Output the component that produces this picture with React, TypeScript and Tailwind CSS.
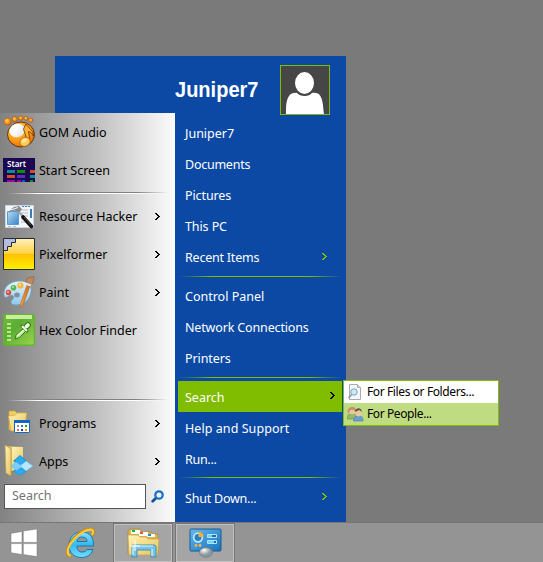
import React from "react";

const uiFont = "font-['Noto_Sans','Open_Sans',sans-serif]";

function Chevron({ className = "" }: { className?: string }) {
  return (
    <svg className={className} width="6" height="9" viewBox="0 0 6 9" shapeRendering="crispEdges" fill="currentColor">
      <path d="M0 1h2v1h1v1h1v1h1v1h-1v1h-1v1h-1v1h-2v-1h1v-1h1v-1h1v-1h-1v-1h-1v-1h-1z" />
    </svg>
  );
}

function GomIcon() {
  return (
    <svg width="34" height="34" viewBox="0 0 34 34">
      <defs>
        <radialGradient id="gom" cx=".35" cy=".3" r=".8">
          <stop offset="0" stopColor="#ffd45c" /><stop offset=".55" stopColor="#ff9d12" /><stop offset="1" stopColor="#e95f00" />
        </radialGradient>
        <linearGradient id="gomw" x1="0" y1="0" x2="1" y2="1">
          <stop offset=".4" stopColor="#fff" /><stop offset="1" stopColor="#d4dbe0" />
        </linearGradient>
      </defs>
      <g fill="url(#gom)" stroke="#b95008" strokeWidth=".7">
        <circle cx="4.5" cy="6.6" r="3.5" /><circle cx="11.8" cy="4.2" r="2.5" /><circle cx="17.8" cy="3.2" r="2.1" /><circle cx="23" cy="3.4" r="2" /><circle cx="27.8" cy="5.3" r="2" />
        <ellipse cx="18" cy="19.5" rx="13.5" ry="12.5" stroke="#613519" strokeWidth="1" />
      </g>
      <ellipse cx="14" cy="15.5" rx="7.8" ry="6.6" fill="url(#gomw)" transform="rotate(-15 14 15)" />
      <path d="M20.500 14l2.500-5c2 4 7 5 7.500 12-1.500-3-3-4-5-4.500l1.200 8-2.500 1z" fill="#ffb02d" stroke="#633819" strokeWidth=".8" />
      <ellipse cx="22" cy="26.8" rx="5.3" ry="4.4" fill="#ffcb51" stroke="#a85d16" strokeWidth=".7" transform="rotate(-25 22 26.8)" />
      <ellipse cx="21" cy="25.500" rx="2.8" ry="2" fill="#ffe3a0" transform="rotate(-25 21 25)" />
    </svg>
  );
}

function StartIcon() {
  return (
    <svg width="32" height="24" viewBox="0 0 32 24">
      <path fill="#1b0752" d="M0 0h32v24H0z" />
      <text x="4" y="9" fill="#fff" fontFamily="Noto Sans, sans-serif" fontSize="9" fontWeight="600" textLength="19" lengthAdjust="spacingAndGlyphs">Start</text>
      <g shapeRendering="crispEdges">
        <path fill="#078d9c" d="M4 12h8v3H4zM27 17h5v3h-5z" /><path fill="#0b9108" d="M14 12h8v3h-8zM27 22h3v2h-3z" />
        <path fill="#d84a25" d="M27 12h5v3h-5zM4 17h8v3H4z" /><path fill="#5930b4" d="M14 17h8v3h-8z" />
        <path fill="#9a0697" d="M4 22h8v2H4zM14 22h4v2h-4z" /><path fill="#0758ca" d="M19 22h3v2h-3z" />
      </g>
    </svg>
  );
}

function HackerIcon() {
  return (
    <svg width="29" height="24" viewBox="0 0 29 24">
      <defs><linearGradient id="rh" x2="1" y2="1"><stop stopColor="#b9dcf5" /><stop offset="1" stopColor="#3683ca" /></linearGradient></defs>
      <path fill="#f4f6f9" stroke="#cbd7e4" d="M.5.5h28v22H.5z" />
      <path fill="#397eb9" d="M17 1h2v1h-2zM20 1h2v1h-2zM23 1h2v1h-2zM25 4h2v9h-2z" /><path fill="url(#rh)" stroke="#559bd3" d="M2.5 6.500h11v13h-11z" />
      <path d="M16 5h7M16 8h7M18 11h5M16 14h3M16 17h5M3 21.500h3M8 21.500h3" stroke="#a8b0b8" strokeWidth=".8" />
      <path d="M4 8c1-3 3-5 5-6l5-1 3 3-3 4-3-2c-2-.5-4 0-7 2z" fill="#85898c" />
      <path d="M6 5l7-2.500" stroke="#eee" strokeWidth="1.2" /><path d="M14 7l5 6" stroke="#a4a9ad" strokeWidth="2.5" />
      <path d="M18 12l8.500 9.500" stroke="#101214" strokeWidth="3.600" strokeLinecap="round" /><path d="M19 12l7 8" stroke="#575b5e" strokeWidth=".8" />
    </svg>
  );
}

function PixelformerIcon() {
  return (
    <svg width="32" height="32" viewBox="0 0 32 32">
      <defs><linearGradient id="px" x2="0" y2="1"><stop stopColor="#fff0c0" /><stop offset=".5" stopColor="#ffd13d" /><stop offset=".51" stopColor="#ffc000" /><stop offset="1" stopColor="#fff200" /></linearGradient></defs>
      <path fill="url(#px)" stroke="#26272a" d="M.5.5h31v31H.5z" />
      <path fill="#b3bddf" stroke="#252936" d="M.5.5h12v4h-4v4h-4v4h-4z" />
    </svg>
  );
}

function PaintIcon() {
  return (
    <svg width="33" height="32" viewBox="0 0 33 32">
      <defs>
        <linearGradient id="pal" x2="0" y2="1"><stop stopColor="#e4f4fe" /><stop offset="1" stopColor="#8fc8e9" /></linearGradient>
        <linearGradient id="brush"><stop stopColor="#f8a444" /><stop offset="1" stopColor="#cf661d" /></linearGradient>
      </defs>
      <path d="M.8 18C1 10 8 5 17 5c8 0 12 5 11 11-1 8-7 13-15 13-6 0-6-3-3-6 2-3-1-5-4-3-3 2-5 2-5.200-2z" fill="url(#pal)" stroke="#659fbe" strokeWidth=".8" />
      <ellipse cx="14" cy="19" rx="2.8" ry="2.5" fill="#7c929f" /><circle cx="5.5" cy="16.5" r="2.7" fill="#dc4a42" /><circle cx="10.5" cy="11.8" r="2.8" fill="#54b852" /><circle cx="17.500" cy="9.5" r="3.1" fill="#ffb52c" />
      <g fill="#fff" opacity=".6"><circle cx="5" cy="16" r="1" /><circle cx="10" cy="11" r="1" /><circle cx="17" cy="9" r="1.2" /></g>
      <path d="M24 9l3 1-7 19-3 2.500.5-3.500z" fill="url(#brush)" stroke="#b86224" strokeWidth=".6" />
      <path d="M23 6l1-4 7-1.500c-1 2 1 5-3 8.500z" fill="#bd8860" stroke="#8d6040" strokeWidth=".6" /><path d="M23.500 6.500l5 2-1.200 2-4.300-1.500z" fill="#e1dfd9" />
    </svg>
  );
}

function HexIcon() {
  return (
    <svg width="32" height="32" viewBox="0 0 32 32">
      <defs><linearGradient id="hex" x2="1" y2="1"><stop stopColor="#72bb3c" /><stop offset=".4" stopColor="#5bad35" /><stop offset="1" stopColor="#9ed64d" /></linearGradient></defs>
      <rect x=".7" y=".7" width="30.6" height="30.6" rx="2" fill="url(#hex)" stroke="#65b52a" strokeWidth="1.4" />
      <path fill="#d3f5a5" d="M3 1h26v4H3z" opacity=".9" /><path fill="#d5f69f" opacity=".8" d="M4 9h4v2H4zm0 4h4v2H4zm0 4h4v2H4zm0 4h4v2H4zm0 4h4v2H4z" />
      <path d="M12 25l1-4 8-7 2.500 2.500-7 7z" fill="#b3e681" stroke="#25671a" strokeWidth=".8" /><path d="M14 22l7-6" stroke="#efffd9" strokeWidth="1.3" />
      <path d="M19 12l5 5" stroke="#25671a" strokeWidth="3" strokeLinecap="round" /><path d="M23 13l2-2" stroke="#25671a" strokeWidth="5.500" strokeLinecap="round" />
      <path d="M19.500 12.500l4 4" stroke="#efffe3" strokeWidth="2" strokeLinecap="round" /><path d="M23.500 12.500l1.500-1.500" stroke="#efffe3" strokeWidth="3.800" strokeLinecap="round" />
    </svg>
  );
}

function FolderDefs() {
  return <defs><linearGradient id="fold" x2="1" y2="1"><stop stopColor="#fff3b4" /><stop offset="1" stopColor="#e5c463" /></linearGradient></defs>;
}

function ProgramsIcon() {
  return (
    <svg width="32" height="32" viewBox="0 0 32 32">
      <FolderDefs />
      <path d="M6 23V5q0-1 1-1h5l2 2h9v16z" fill="#f2cf62" stroke="#cfa53c" strokeWidth=".8" /><path d="M5.500 9l7-1 2-2h9l-2 18H8z" fill="url(#fold)" stroke="#d2ad4e" strokeWidth=".8" />
      <rect x="11.5" y="13.500" width="15" height="12" rx=".8" fill="#fff" stroke="#1166be" /><path fill="#1266c6" d="M11 13h16v3H11z" />
      <g shapeRendering="crispEdges"><path fill="#898ea0" d="M14 18h2v2h-2z" /><path fill="#4c77b5" d="M18 18h2v2h-2z" /><path fill="#20a42a" d="M22 18h2v2h-2z" /><path fill="#e96940" d="M14 22h2v2h-2z" /><path fill="#163894" d="M18 22h2v2h-2z" /><path fill="#e3a000" d="M22 22h2v2h-2z" /></g>
    </svg>
  );
}

function AppsIcon() {
  return (
    <svg width="32" height="34" viewBox="0 0 32 34">
      <FolderDefs />
      <path d="M3 2l17 1v24H6z" fill="#e0be61" /><path d="M9 3h11v23H9z" fill="url(#fold)" /><path d="M2 1l6 4v27l-5-3z" fill="url(#fold)" stroke="#b99c4f" strokeWidth=".7" />
      <path fill="#2198df" d="M17 11l7 6-7 6-7-6zM17 22l7 5-7 5-7-5z" /><path fill="#7fcdf5" stroke="#60bde9" strokeWidth=".5" d="M14 17l6 5-6 5-6-5z" /><path fill="#b5e8ff" stroke="#58bce9" strokeWidth=".5" d="M23 17l7 5-7 5-6-5z" /><path fill="#2daaf0" d="M17 24l5 3.500-5 4-5-4zM17 12l5 5-5 4-5-4z" />
    </svg>
  );
}

function SearchIcon() {
  return <svg width="14" height="14" viewBox="0 0 14 14" fill="none"><path d="M5 8L1.700 11.300" stroke="#164fa1" strokeWidth="2.8" strokeLinecap="round" /><circle cx="8" cy="5" r="3.700" stroke="#1972c5" strokeWidth="2.300" /></svg>;
}

function WindowsIcon() {
  return <svg width="28" height="28" viewBox="0 0 28 28"><path d="M1 4.4l11-2v11H1zM13.3 2.1L27 0v13.4H13.3zM1 14.6h11v10.9L1 23.7zM13.3 14.6H27v13l-13.7-2z" fill="#fff" stroke="#777" strokeWidth=".5" /></svg>;
}

function IeIcon() {
  return (
    <svg width="32" height="32" viewBox="0 0 32 32" fill="none">
      <defs><linearGradient id="ie" x2="0" y2="1"><stop stopColor="#8be3fd" /><stop offset=".5" stopColor="#35b9ee" /><stop offset="1" stopColor="#75ddfc" /></linearGradient></defs>
      <path fillRule="evenodd" d="M28.500 19H12c0 4 2 6 5 6s4-1 5-2.500h6c-2 5.500-6 8-11.500 8-7.500 0-12.500-5-12.500-12.500S9 5 17 5s12 6 11.500 14zM12 14.500h10c0-3-2-4.500-5-4.500s-4.500 1.500-5 4.500z" fill="url(#ie)" stroke="#1679b6" />
      <path d="M6 29c-5 1-5-6-1-12.500C10 8 19 2.500 25 2c5-1 4 4 2 7" stroke="#c98c20" strokeWidth="2.8" />
      <path d="M5.500 28.500c-4-.5-3.500-6 0-11.500C11 8.500 19 3 25.500 2.500c3 0 3 3 1.500 5.500" stroke="#ffd037" strokeWidth="2" />
    </svg>
  );
}

function ExplorerIcon() {
  return (
    <svg width="33" height="30" viewBox="0 0 33 30">
      <FolderDefs />
      <path fill="#dab251" stroke="#aa8439" strokeWidth=".7" d="M1 3l2-2h10l2 3h9l2 2h5v20H1z" />
      <path fill="#fffdf0" d="M4 2h9v4H4zm8 2h9v4h-9zm8 2h8v3h-8z" />
      <path fill="#18b33d" d="M5 2h3v2H5z" /><path fill="#e85732" d="M13 4h3v2h-3z" /><path fill="#298acf" d="M21 6h3v2h-3z" />
      <path fill="url(#fold)" stroke="#c6a550" strokeWidth=".7" d="M1 7h10l2 2h6l2 2h11l-1 16H2z" />
      <path d="M5 29V18q0-1 1-1h21q2 0 2 2v10h-5v-7H10v7z" fill="#79c4e6" stroke="#3d91b1" /><path d="M6 27v-9h20M25 21v7" fill="none" stroke="#d9f8ff" strokeWidth="1.2" />
      <path d="M8 12v11M3 18h10" stroke="#fff" strokeWidth="1" />
    </svg>
  );
}

function ControlIcon() {
  return (
    <svg width="33" height="30" viewBox="0 0 33 30">
      <defs><linearGradient id="cp" x2="1" y2="1"><stop stopColor="#64b9ed" /><stop offset="1" stopColor="#1972bc" /></linearGradient><radialGradient id="orb" cx=".35" cy=".25"><stop stopColor="#fff" /><stop offset="1" stopColor="#8c989c" /></radialGradient></defs>
      <rect x="1" y="1" width="31" height="22" rx="1" fill="url(#cp)" stroke="#185d95" />
      <circle cx="9" cy="9.500" r="4.3" fill="#2382cc" stroke="#c2e9ff" strokeWidth="1.7" /><path d="M9.500 9V4q5 0 5 5z" fill="#ffac37" />
      <path fill="#1a6eaf" stroke="#b7e4fb" d="M18.5 6.500h9v3h-9zm0 6h9v3h-9z" /><path d="M19 8h4m-4 6h6" stroke="#65d6ff" strokeWidth="2" />
      <circle cx="7" cy="17.500" r="1.4" fill="#ffb150" /><circle cx="11" cy="17.500" r="1.4" fill="#ffb150" />
      <ellipse cx="17" cy="24.500" rx="6.500" ry="4.800" fill="url(#orb)" stroke="#737d81" strokeWidth=".7" />
    </svg>
  );
}

function FilesIcon() {
  return <svg width="16" height="16" viewBox="0 0 16 16"><path d="M2.500.5h8l3 3v12h-11z" fill="#f5f6f7" stroke="#a9abad" /><path d="M10.500.5v3h3" fill="#ddd" stroke="#aaa" /><path d="M5 10l-3.500 4" stroke="#8b9aa6" strokeWidth="1.600" /><circle cx="7" cy="8" r="3.200" fill="#cee8f7" stroke="#7ba1b9" /></svg>;
}

function PeopleIcon() {
  return (
    <svg width="17" height="16" viewBox="0 0 17 16">
      <path d="M0 13c0-4 2-5 5-5s5 1 5 5z" fill="#93bd62" stroke="#5d9150" strokeWidth=".6" /><circle cx="5" cy="5.500" r="3" fill="#ebc6a2" /><path d="M1 8C0 3 2 1 5 1s5 2 4 5C7 4.500 6 3.500 4 4 2 4 3 7 1 8z" fill="#c29263" />
      <path d="M6.500 15c0-4 1.500-5 5-5s4.500 1 4.500 5z" fill="#6a9fd0" stroke="#4b7aa8" strokeWidth=".6" /><ellipse cx="11.500" cy="7" rx="2.800" ry="3.500" fill="#edc5a0" /><path d="M8 6c0-5 7.500-5 6.500 0l-2-2z" fill="#5a5850" />
    </svg>
  );
}

function LeftRow({ icon, label, arrow = false }: { icon: React.ReactNode; label: string; arrow?: boolean }) {
  return (
    <div className="flex h-[38px] items-center pl-[3px] pr-[14px]">
      <span className="flex w-9 shrink-0 justify-start">{icon}</span>
      <span className="whitespace-nowrap pt-0.5">{label}</span>
      {arrow && <Chevron className="ml-auto" />}
    </div>
  );
}

function RightRow({ label, arrow = false, active = false, track = "", pad = "" }: { label: string; arrow?: boolean; active?: boolean; track?: string; pad?: string }) {
  return (
    <div className={`ml-[3px] mr-1 flex h-[31px] items-center pl-[7px] ${active ? "bg-[#80bc00] pr-1.5" : "pr-[14px]"}`}>
      <span className={`whitespace-nowrap ${track} ${pad}`}>{label}</span>
      {arrow && <Chevron className={`ml-auto -translate-y-px ${active ? "text-black" : "text-[#80bc00]"}`} />}
    </div>
  );
}

function GreenLine() {
  return <div className="h-2 px-1 pt-[3px]"><div className="h-px w-full bg-[linear-gradient(to_right,transparent,#80bc00_20%,#80bc00_80%,transparent)]" /></div>;
}

function GrayLine() {
  return (
    <div className="h-2 px-[7px] pt-[3px]">
      <div className="h-px bg-[linear-gradient(to_right,transparent,#808080_25%,#808080_80%,transparent)]" />
      <div className="h-px bg-[linear-gradient(to_right,transparent,#fff_20%,#fff_80%,transparent)]" />
    </div>
  );
}

export default function App() {
  return (
    <main className={`relative flex h-[562px] w-[543px] flex-col overflow-hidden bg-[#7a7a7a] text-[12.5px] leading-[18px] ${uiFont}`}>
      <section className="mt-14 flex h-[466px] w-[346px] shrink-0 flex-col">
        <header className="ml-[55px] flex h-[57px] items-start justify-end bg-[#0b49a5] pr-4 pt-[9px] text-white">
          <h1 className="mr-[21px] mt-[13px] w-[84px] origin-left scale-x-[0.91] whitespace-nowrap font-['Liberation_Sans',sans-serif] text-[22px] font-bold leading-[24px]">Juniper7</h1>
          <div className="z-10 h-[50px] w-[50px] shrink-0 border border-[#80bc00] bg-[#464646]">
            <svg width="48" height="48" viewBox="0 0 48 48" fill="#fff">
              <path d="M5 48c0-8 0-20 8-21l5-.5c2 2 4 3 6 3s4-1 6-3l5 .5c7 1 7 13 8 21z" />
              <ellipse cx="23.500" cy="17" rx="10.500" ry="12" stroke="#464646" strokeWidth="2" />
            </svg>
          </div>
        </header>
        <div className="flex h-[409px]">
          <nav className="flex w-[175px] flex-col bg-linear-to-r from-[#828282] via-[#c0c0c0] via-55% to-[#fcfcfc] text-black">
            <LeftRow icon={<GomIcon />} label="GOM Audio" />
            <LeftRow icon={<StartIcon />} label="Start Screen" />
            <GrayLine />
            <LeftRow icon={<span className="pl-0.5 pt-0.5"><HackerIcon /></span>} label="Resource Hacker" arrow />
            <LeftRow icon={<PixelformerIcon />} label="Pixelformer" arrow />
            <LeftRow icon={<PaintIcon />} label="Paint" arrow />
            <LeftRow icon={<HexIcon />} label="Hex Color Finder" />
            <div className="mt-auto"><GrayLine /></div>
            <LeftRow icon={<ProgramsIcon />} label="Programs" arrow />
            <LeftRow icon={<AppsIcon />} label="Apps" arrow />
            <div className="mb-[13px] mt-1 flex h-[25px] items-center pl-1">
              <div className="flex h-[25px] w-[142px] items-center border border-[#555] bg-white pl-[7px] pb-0.5 text-[#747474]">Search</div>
              <span className="ml-[5px]"><SearchIcon /></span>
            </div>
          </nav>
          <nav className="w-[171px] bg-[#0b49a5] pt-[5px] text-white">
            <RightRow label="Juniper7" />
            <RightRow label="Documents" track="tracking-[-0.25px]" />
            <RightRow label="Pictures" track="tracking-[-0.1px]" />
            <RightRow label="This PC" track="tracking-[-0.1px]" />
            <RightRow label="Recent Items" arrow track="tracking-[-0.22px]" />
            <GreenLine />
            <RightRow label="Control Panel" />
            <RightRow label="Network Connections" track="tracking-[-0.15px]" />
            <RightRow label="Printers" track="tracking-[-0.1px]" />
            <div className="h-[7px]"><GreenLine /></div>
            <RightRow label="Search" arrow active pad="pt-0.5" />
            <RightRow label="Help and Support" track="tracking-[0.06px]" pad="pt-0.5" />
            <RightRow label="Run..." track="tracking-[-0.3px]" pad="pt-0.5" />
            <GreenLine />
            <RightRow label="Shut Down..." arrow track="tracking-[-0.22px]" pad="pt-0.5" />
          </nav>
        </div>
      </section>
      <aside className="absolute left-[343px] top-[380px] z-20 h-[46px] w-[156px] border border-[#80bc00] bg-white text-[12px]">
        <div className="flex h-[22px] items-center pl-[3px]"><FilesIcon /><span className="ml-1 whitespace-nowrap tracking-[-0.39px]">For Files or Folders...</span></div>
        <div className="flex h-[22px] items-center bg-[#c0dc83] pl-[3px]"><PeopleIcon /><span className="ml-[3px] whitespace-nowrap tracking-[-0.39px]">For People...</span></div>
      </aside>
      <footer className="flex h-10 items-center border-t border-[#777] bg-[#949494]">
        <span className="ml-[10px]"><WindowsIcon /></span>
        <span className="ml-[27px]"><IeIcon /></span>
        <div className="ml-4 flex h-10 w-[60px] items-center justify-center border border-[#767676] bg-[#a5a5a5] shadow-[inset_0_0_0_1px_#c0c0c0]"><ExplorerIcon /></div>
        <div className="ml-0.5 flex h-10 w-[60px] items-center justify-center border border-[#767676] bg-[#a5a5a5] shadow-[inset_0_0_0_1px_#c0c0c0]"><ControlIcon /></div>
      </footer>
    </main>
  );
}
